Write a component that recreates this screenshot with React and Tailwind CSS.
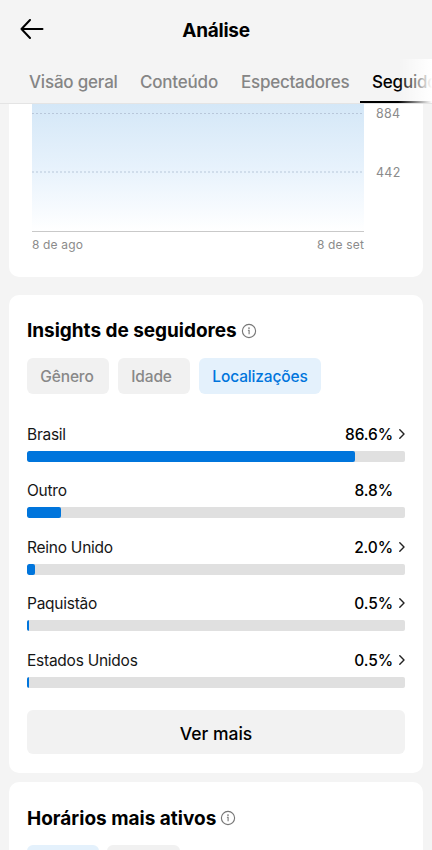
import React from "react";

const regions = [
  { name: "Brasil", value: "86.6%", width: 327.5, link: true },
  { name: "Outro", value: "8.8%", width: 33.5, link: false },
  { name: "Reino Unido", value: "2.0%", width: 7.5, link: true },
  { name: "Paquistão", value: "0.5%", width: 2, link: true },
  { name: "Estados Unidos", value: "0.5%", width: 2, link: true },
];

function InfoIcon() {
  return (
    <svg width="16" height="16" viewBox="0 0 16 16" fill="none" className="-mt-px shrink-0">
      <circle cx="8" cy="8" r="6.6" stroke="#777777" strokeWidth="1.15" />
      <circle cx="8" cy="5.1" r="0.85" fill="#777777" />
      <path d="M6.9 7.3H8.1V11.2" stroke="#777777" strokeWidth="1.1" />
    </svg>
  );
}

function Header() {
  return (
    <header className="grid h-[59px] shrink-0 grid-cols-[60px_1fr_60px] items-center">
      <svg width="24" height="20" viewBox="0 0 24 20" fill="none" className="-mt-[1px] ml-[20px]">
        <path d="M10 1L1.5 10L10 19M1.5 10H22.5" stroke="#000" strokeWidth="2" strokeLinejoin="round" strokeLinecap="round" />
      </svg>
      <h1 className="mt-[2px] text-center text-[19px] leading-6 font-bold tracking-[-0.25px] text-black">Análise</h1>
    </header>
  );
}

function Tabs() {
  return (
    <nav className="relative flex h-[45px] shrink-0 overflow-hidden border-b border-[#e4e4e4] pl-[29px] text-[17px] leading-[46px] font-medium tracking-[-0.2px] whitespace-nowrap text-[#858585]">
      <span className="w-[111px] shrink-0">Visão geral</span>
      <span className="w-[101px] shrink-0">Conteúdo</span>
      <span className="w-[119px] shrink-0 tracking-[-0.25px]">Espectadores</span>
      <span className="h-[44px] w-[112px] shrink-0 border-b-[2.5px] border-black pl-[12px] text-black">Seguidores</span>
      <div className="absolute top-0 right-0 h-full w-[34px] bg-linear-to-r from-white/0 to-white" />
    </nav>
  );
}

function Chart() {
  return (
    <section className="h-[173px] shrink-0 rounded-b-[10px] bg-white pl-[23px] text-[12px] text-[#8b8b8b]">
      <div className="flex">
        <svg width="332" height="128" viewBox="0 0 332 128" className="shrink-0">
          <defs>
            <linearGradient id="area" x1="0" y1="0" x2="0" y2="1">
              <stop offset="0" stopColor="#d4e7f7" />
              <stop offset="0.5" stopColor="#e7f2fc" />
              <stop offset="1" stopColor="#ffffff" />
            </linearGradient>
          </defs>
          <rect width="332" height="127" fill="url(#area)" />
          <path d="M0 9.5H332M0 68H332" stroke="#b8c7da" strokeWidth="1.2" strokeDasharray="2 2" />
          <path d="M0 127.5H332" stroke="#c9c9c9" />
        </svg>
        <div className="flex flex-col gap-[43px] pl-[12px] text-[12.5px] leading-4 tracking-[0.3px]">
          <span className="mt-[2px]">884</span>
          <span>442</span>
        </div>
      </div>
      <div className="flex w-[332px] justify-between pt-[5px] leading-4 tracking-[0.15px]">
        <span>8 de ago</span>
        <span>8 de set</span>
      </div>
    </section>
  );
}

function Chevron() {
  return (
    <svg width="6" height="10" viewBox="0 0 6 10" fill="none">
      <path d="M0.8 0.8L5 5L0.8 9.2" stroke="#222" strokeWidth="1.4" strokeLinecap="round" strokeLinejoin="round" />
    </svg>
  );
}

function Region({ region }) {
  return (
    <div className="h-[56.4px] shrink-0">
      <div className="flex h-[22px] items-center text-[15.5px] leading-[22px] text-[#161616]">
        <span className="flex-1 tracking-[-0.25px]">{region.name}</span>
        <span className="font-medium tracking-[-0.1px] text-black">{region.value}</span>
        <span className="-mt-[2px] flex w-[12px] justify-end">{region.link && <Chevron />}</span>
      </div>
      <div className="mt-[5px] h-[11px] overflow-hidden rounded-[2px] bg-[#e0e0e0]">
        <div className="h-full rounded-[2px] bg-[#0075dc]" style={{ width: region.width }} />
      </div>
    </div>
  );
}

function Insights() {
  return (
    <section className="mt-[18px] h-[478px] shrink-0 rounded-[10px] bg-white px-[18px] pt-[23px]">
      <div className="flex h-[26px] items-center gap-[4px]">
        <h2 className="text-[19px] leading-[26px] font-bold tracking-[-0.03px]">Insights de seguidores</h2>
        <InfoIcon />
      </div>
      <div className="mt-[14.4px] flex h-[36px] gap-[9px] text-center text-[15.5px] leading-[38px] font-medium tracking-[-0.15px] text-[#888888]">
        <span className="w-[82px] rounded-[6px] bg-[#f1f1f1] pr-[2px]">Gênero</span>
        <span className="w-[72px] rounded-[6px] bg-[#f1f1f1] pr-[5px]">Idade</span>
        <span className="w-[122px] rounded-[6px] bg-[#e4f1fc] text-[#0075dc]">Localizações</span>
      </div>
      <div className="mt-[29.7px]">
        {regions.map((region) => (
          <Region key={region.name} region={region} />
        ))}
      </div>
      <button className="mt-[3.9px] block h-[44px] w-full rounded-[6px] bg-[#f2f2f2] pt-[4px] text-[17.5px] font-medium text-black">Ver mais</button>
    </section>
  );
}

function ActiveTimes() {
  return (
    <section className="mt-[9px] h-[68px] shrink-0 overflow-hidden rounded-t-[10px] bg-white px-[18px] pt-[23px]">
      <div className="flex h-[26px] items-center gap-[4px]">
        <h2 className="pt-px text-[19px] leading-[26px] font-bold tracking-[0px]">Horários mais ativos</h2>
        <InfoIcon />
      </div>
      <div className="mt-[14px] flex gap-[8px]">
        <span className="h-[36px] w-[72px] rounded-[6px] bg-[#e4f1fc]" />
        <span className="h-[36px] w-[73px] rounded-[6px] bg-[#f1f1f1]" />
      </div>
    </section>
  );
}

export default function App() {
  return (
    <div className="flex h-[850px] w-[432px] flex-col overflow-hidden bg-[#f4f4f4] font-['Inter','Liberation_Sans',sans-serif] text-black">
      <Header />
      <Tabs />
      <main className="flex flex-col pr-[9px] pl-[9px]">
        <Chart />
        <Insights />
        <ActiveTimes />
      </main>
    </div>
  );
}
